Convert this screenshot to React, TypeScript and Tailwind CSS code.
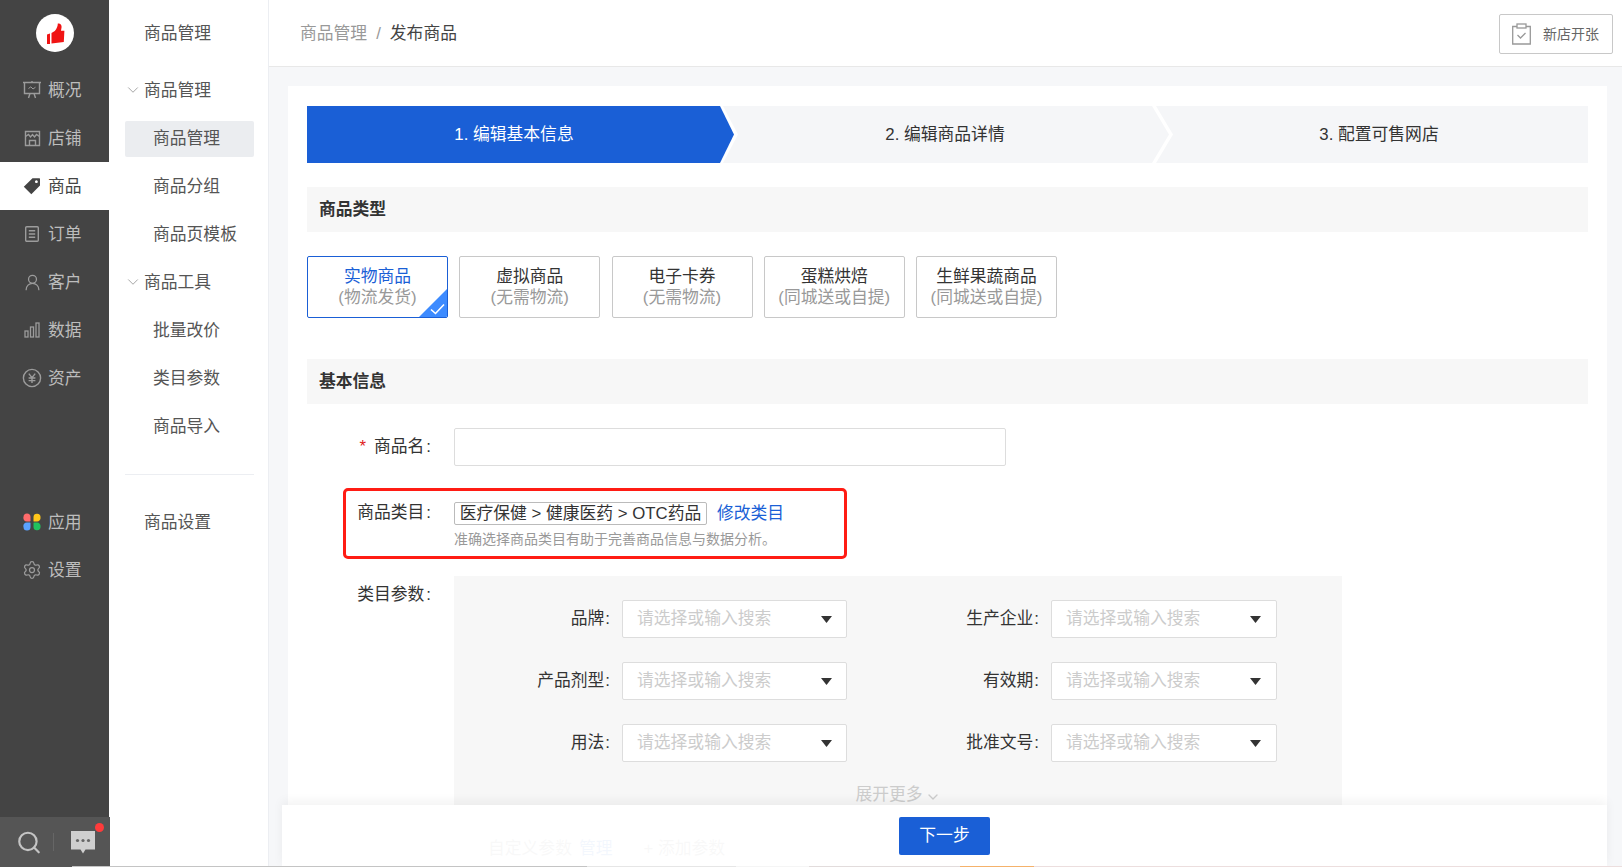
import { ChevronDown, Search, Settings, UserRound } from "lucide-react";
import type { ReactNode } from "react";

const BoardIcon = () => (
  <svg width="20" height="20" viewBox="0 0 20 20" fill="none" stroke="#9c9c9c" strokeWidth="1.4">
    <path d="M1 2.5H19M2.5 2.5V13.5H17.5V2.5M6.5 18 8 13.5M13.5 18 12 13.5M10 1V2.5" />
    <path d="M6.5 8.5 8.8 6.8 11 9 13.5 7.2" strokeWidth="1" />
  </svg>
);

const ShopIcon = () => (
  <svg width="19" height="19" viewBox="0 0 19 19" fill="none" stroke="#9c9c9c" strokeWidth="1.4">
    <path d="M2.5 2.5H16.5V16.5H2.5Z" />
    <path d="M2.5 7.5 5.5 5.5 7.5 8 9.5 5.5 11.5 8 13.5 5.5 16.5 7.5" />
    <path d="M6.5 16.5V11.5H12.5V16.5" />
  </svg>
);

const TagIcon = () => (
  <svg width="18" height="18" viewBox="0 0 18 18">
    <path
      fillRule="evenodd"
      d="M9.5 1.2 16.4 1.2 C16.8 1.2 17 1.5 17 1.8 L17 8.6 L8.3 17.2 L0.8 9.8 Z M13.4 3.3 a1.4 1.4 0 1 0 0.01 0 Z"
      fill="#444"
    />
  </svg>
);

const OrderIcon = () => (
  <svg width="18" height="18" viewBox="0 0 18 18" fill="none" stroke="#9c9c9c" strokeWidth="1.4">
    <rect x="2.7" y="1.7" width="12.6" height="14.6" rx="1" />
    <path d="M5.8 5.8h6.4M5.8 9h6.4M5.8 12.2h6.4" />
  </svg>
);

const BarsIcon = () => (
  <svg width="18" height="18" viewBox="0 0 18 18" fill="none" stroke="#9c9c9c" strokeWidth="1.3">
    <rect x="2" y="10" width="3" height="6" />
    <rect x="7.5" y="6" width="3" height="10" />
    <rect x="13" y="2" width="3" height="14" />
  </svg>
);

const YenIcon = () => (
  <svg width="20" height="20" viewBox="0 0 20 20" fill="none" stroke="#9c9c9c" strokeWidth="1.4">
    <circle cx="10" cy="10" r="8.6" />
    <path d="M6.8 5.6 10 9.6l3.2-4M6.6 10h6.8M6.6 12.6h6.8M10 9.6v5.4" />
  </svg>
);

const AppsIcon = () => (
  <svg width="18" height="18" viewBox="0 0 18 18">
    <path d="M0.5 4a3.5 3.5 0 0 1 7 0v3.8a0.7 0.7 0 0 1-0.7 0.7H4a3.5 3.5 0 0 1-3.5-4.5Z" fill="#ff6b6b" />
    <path d="M10.5 4a3.5 3.5 0 0 1 7 0.5a3.5 3.5 0 0 1-3.5 4h-3a0.5 0.5 0 0 1-0.5-0.5Z" fill="#ffc61a" />
    <path d="M4 9.5h3a0.5 0.5 0 0 1 0.5 0.5v4a3.5 3.5 0 0 1-7 0a3.5 3.5 0 0 1 3.5-4.5Z" fill="#5aa2ff" />
    <path d="M11 9.5h3a3.5 3.5 0 0 1 3.5 4a3.5 3.5 0 0 1-7 0.5v-4a0.5 0.5 0 0 1 0.5-0.5Z" fill="#21c25e" />
  </svg>
);

const mainNav: { label: string; icon: ReactNode; active?: boolean }[] = [
  { label: "概况", icon: <BoardIcon /> },
  { label: "店铺", icon: <ShopIcon /> },
  { label: "商品", icon: <TagIcon />, active: true },
  { label: "订单", icon: <OrderIcon /> },
  { label: "客户", icon: <UserRound size={19} color="#9c9c9c" strokeWidth={1.6} /> },
  { label: "数据", icon: <BarsIcon /> },
  { label: "资产", icon: <YenIcon /> },
];

const NavRow = ({ label, icon, active }: { label: string; icon: ReactNode; active?: boolean }) => (
  <div
    className={
      active
        ? "flex h-[48px] items-center gap-[6px] bg-white pl-[22px] text-[#444]"
        : "flex h-[48px] items-center gap-[6px] pl-[22px] text-[#bdbdbd]"
    }
  >
    <span className="flex w-[20px] justify-center">{icon}</span>
    <span className="pt-[2px]">{label}</span>
  </div>
);

const Sidebar = () => (
  <aside className="flex w-[109px] shrink-0 flex-col bg-[#444]">
    <div className="flex h-[66px] shrink-0 items-center justify-center">
      <div className="flex h-[38px] w-[38px] items-center justify-center rounded-full bg-white">
        <svg width="38" height="38" viewBox="0 0 38 38">
          <path d="M11 20.5 14 19.5V30H11Z" fill="#f01414" />
          <path
            d="M15.5 19 18.8 17C20.8 14.5 21.8 12 21.8 9.5C24 9 25.6 10.2 25.6 13L25 16.8H28.4L27.8 28 15.5 29.6Z"
            fill="#f01414"
          />
        </svg>
      </div>
    </div>
    {mainNav.map((item) => (
      <NavRow key={item.label} {...item} />
    ))}
    <div className="mt-[96px]">
      <NavRow label="应用" icon={<AppsIcon />} />
      <NavRow label="设置" icon={<Settings size={20} color="#9c9c9c" strokeWidth={1.5} />} />
    </div>
    <div className="relative mt-auto flex h-[50px] w-[110px] shrink-0 items-center bg-[#555]">
      <span className="ml-[16px] flex w-[26px] justify-center">
        <Search size={27} color="#c4c4c4" strokeWidth={2} />
      </span>
      <span className="ml-[11px] h-[18px] w-px bg-[#666]" />
      <svg className="ml-[17px]" width="24" height="23" viewBox="0 0 24 23">
        <path d="M0 0H24V18.5H14.5L12 22.5 9.5 18.5H0Z" fill="#cfcfcf" />
        <circle cx="6.5" cy="9.5" r="1.6" fill="#666" />
        <circle cx="12" cy="9.5" r="1.6" fill="#666" />
        <circle cx="17.5" cy="9.5" r="1.6" fill="#666" />
      </svg>
      <span className="absolute left-[95px] top-[6px] h-[9px] w-[9px] rounded-full bg-[#ff3b3b]" />
    </div>
  </aside>
);

const SubItem = ({ label, active }: { label: string; active?: boolean }) => (
  <div className="flex h-[48px] items-center pl-[16px] pt-px">
    <div
      className={
        active
          ? "flex h-[36px] w-[129px] shrink-0 items-center rounded-[2px] bg-[#ebedf0] pl-[28px] pt-px"
          : "flex h-[36px] w-[129px] shrink-0 items-center pl-[28px] pt-px"
      }
    >
      {label}
    </div>
  </div>
);

const GroupRow = ({ label }: { label: string }) => (
  <div className="flex h-[48px] items-center pl-[15px]">
    <ChevronDown size={18} color="#888" strokeWidth={1} />
    <span className="ml-[2px] pt-[2px]">{label}</span>
  </div>
);

const SubNav = () => (
  <aside className="w-[160px] shrink-0 border-r border-[#eceef2] bg-white text-[#555]">
    <div className="flex h-[66px] items-center pl-[35px] pt-[2px]">商品管理</div>
    <GroupRow label="商品管理" />
    <SubItem label="商品管理" active />
    <SubItem label="商品分组" />
    <SubItem label="商品页模板" />
    <GroupRow label="商品工具" />
    <SubItem label="批量改价" />
    <SubItem label="类目参数" />
    <SubItem label="商品导入" />
    <div className="ml-[16px] mt-[24px] w-[129px] border-t border-[#eceef2]" />
    <div className="mt-[23px] flex h-[48px] items-center pl-[35px] pt-[2px]">商品设置</div>
  </aside>
);

const StepBar = () => (
  <div className="flex h-[57px] bg-[#f5f6f8] text-[#333]">
    <div className="relative z-20 w-[431px] shrink-0 bg-white [clip-path:polygon(0_0,416px_0,100%_50%,416px_100%,0_100%)]">
      <div className="flex h-full w-[427px] items-center justify-center bg-[#1a5fd6] pr-[13px] text-white [clip-path:polygon(0_0,413px_0,100%_50%,413px_100%,0_100%)]">
        1. 编辑基本信息
      </div>
    </div>
    <div className="relative z-10 -ml-[15px] w-[450px] shrink-0 bg-white [clip-path:polygon(0_0,433px_0,100%_50%,433px_100%,0_100%)]">
      <div className="flex h-full w-[446px] items-center justify-center bg-[#f5f6f8] pr-[2px] [clip-path:polygon(0_0,429px_0,100%_50%,429px_100%,0_100%)]">
        2. 编辑商品详情
      </div>
    </div>
    <div className="-ml-[17px] flex flex-1 items-center justify-center pl-[14px]">3. 配置可售网店</div>
  </div>
);

const SectionTitle = ({ children }: { children: ReactNode }) => (
  <div className="flex h-[45px] items-center bg-[#f7f7f7] pl-[12px] pt-px font-bold text-[#333]">{children}</div>
);

const productTypes = [
  { name: "实物商品", sub: "(物流发货)", active: true },
  { name: "虚拟商品", sub: "(无需物流)" },
  { name: "电子卡券", sub: "(无需物流)" },
  { name: "蛋糕烘焙", sub: "(同城送或自提)" },
  { name: "生鲜果蔬商品", sub: "(同城送或自提)" },
];

const TypeCards = () => (
  <div className="mt-[24px] flex gap-[11.25px]">
    {productTypes.map((t) => (
      <div
        key={t.name}
        className={
          t.active
            ? "relative flex h-[62px] w-[141px] flex-col items-center justify-center overflow-hidden rounded-[2px] border border-[#1a5fd6] leading-[21px]"
            : "relative flex h-[62px] w-[141px] flex-col items-center justify-center overflow-hidden rounded-[2px] border border-[#c8c8c8] leading-[21px]"
        }
      >
        <span className={t.active ? "text-[#1a5fd6]" : "text-[#333]"}>{t.name}</span>
        <span className="text-[#999]">{t.sub}</span>
        {t.active && (
          <svg className="absolute bottom-0 right-0" width="28" height="28" viewBox="0 0 28 28">
            <path d="M28 0V28H0Z" fill="#3d8bff" />
            <path d="M12 20.5 16.5 24.5 25 15.5" fill="none" stroke="#fff" strokeWidth="1.6" />
          </svg>
        )}
      </div>
    ))}
  </div>
);

const SelectField = ({ label, wide }: { label: string; wide?: boolean }) => (
  <div className="flex items-center">
    <div className="w-[156px] text-right text-[#333]">
      {label}
      <span className="ml-px">:</span>
    </div>
    <div
      className={
        wide
          ? "ml-[12px] flex h-[38px] w-[226px] items-center justify-between rounded-[2px] border border-[#ddd] bg-white pl-[14px] pr-[15px] text-[#ccc]"
          : "ml-[12px] flex h-[38px] w-[225px] items-center justify-between rounded-[2px] border border-[#ddd] bg-white pl-[14px] pr-[14px] text-[#ccc]"
      }
    >
      <span>请选择或输入搜索</span>
      <svg width="11" height="7" viewBox="0 0 11 7">
        <path d="M0 0H11L5.5 7Z" fill="#333" />
      </svg>
    </div>
  </div>
);

const ProductForm = () => (
  <div className="mt-[24px] flex flex-1 flex-col">
    <div className="flex h-[38px] items-center">
      <div className="w-[125px] pr-px text-right text-[#333]">
        <span className="mr-[8px] text-[#e02020]">*</span>商品名
        <span className="ml-[2px]">:</span>
      </div>
      <div className="ml-[22px] h-[38px] w-[552px] rounded-[2px] border border-[#ddd]" />
    </div>

    <div className="ml-[36px] mt-[22px] flex h-[71px] w-[504px] rounded-[5px] border-[3px] border-[#ff1c14] pt-[10px]">
      <div className="w-[86px] pr-px text-right leading-[23px] text-[#333]">
        商品类目
        <span className="ml-[2px]">:</span>
      </div>
      <div className="ml-[22px]">
        <div className="flex items-center">
          <span className="flex h-[23px] w-[253px] items-center justify-center rounded-[2px] border border-[#bbb] text-[#333]">
            医疗保健 &gt; 健康医药 &gt; OTC药品
          </span>
          <span className="ml-[10px] text-[#1a5fd6]">修改类目</span>
        </div>
        <div className="mt-[3px] text-[14px] leading-[20px] text-[#999]">
          准确选择商品类目有助于完善商品信息与数据分析。
        </div>
      </div>
    </div>

    <div className="mt-[17px] flex flex-1">
      <div className="w-[125px] pr-px pt-[7px] text-right leading-[24px] text-[#333]">
        类目参数
        <span className="ml-[2px]">:</span>
      </div>
      <div className="ml-[22px] w-[888px] bg-[#f7f7f7] pt-[24px]">
        <div className="grid grid-cols-[429px_429px] gap-y-[24px]">
          <SelectField label="品牌" />
          <SelectField label="生产企业" wide />
          <SelectField label="产品剂型" />
          <SelectField label="有效期" wide />
          <SelectField label="用法" />
          <SelectField label="批准文号" wide />
        </div>
        <div className="mt-[21px] flex items-center justify-center leading-[24px] text-[#ccc]">
          展开更多
          <ChevronDown size={16} className="ml-[2px] mt-[3px]" />
        </div>
        <div className="ml-[34px] mt-[30px] flex leading-[24px]">
          <span className="text-[#777]">自定义参数</span>
          <span className="ml-[7px] text-[#1a5fd6]">管理</span>
          <span className="ml-[31px] text-[#777]">+ 添加参数</span>
        </div>
      </div>
    </div>
  </div>
);

const TopBar = () => (
  <header className="flex h-[67px] shrink-0 items-center justify-between border-b border-[#e8e8e8] bg-white pl-[31px] pr-[9px]">
    <div className="flex items-center pt-px">
      <span className="text-[#999]">商品管理</span>
      <span className="mx-[9px] text-[#999]">/</span>
      <span className="text-[#444]">发布商品</span>
    </div>
    <div className="mt-px flex h-[40px] w-[114px] items-center rounded-[2px] border border-[#c8c8c8] pl-[11px] text-[14px] text-[#666]">
      <svg width="21" height="22" viewBox="0 0 21 22" fill="none" stroke="#999" strokeWidth="1.3">
        <path d="M6 3.5H1.7V21H19.3V3.5H15" />
        <rect x="6" y="1" width="9" height="4" />
        <path d="M6.5 12 9.5 15 14.5 10" />
      </svg>
      <span className="ml-[11px] pt-[2px]">新店开张</span>
    </div>
  </header>
);

const bottomStrip = [
  { w: 515, c: "#c4c4c4" },
  { w: 149, c: "#e6e6e6" },
  { w: 73, c: "#f5f5f5" },
  { w: 151, c: "#e2dcdc" },
  { w: 74, c: "#f5b26b" },
  { w: 588, c: "#ecdede" },
];

export default function App() {
  return (
    <div className="relative flex h-[867px] w-[1622px] overflow-hidden bg-white font-['Liberation_Sans','Noto_Sans_CJK_SC',sans-serif] text-[16.8px]">
      <Sidebar />
      <SubNav />
      <main className="relative flex min-w-0 flex-1 flex-col bg-[#f6f7f9]">
        <TopBar />
        <div className="ml-[19px] mr-[15px] mt-[19px] flex flex-1 flex-col bg-white px-[19px] pt-[20px]">
          <StepBar />
          <div className="mt-[24px]">
            <SectionTitle>商品类型</SectionTitle>
          </div>
          <TypeCards />
          <div className="mt-[41px]">
            <SectionTitle>基本信息</SectionTitle>
          </div>
          <ProductForm />
        </div>
        <div className="absolute bottom-0 left-[13px] flex h-[62px] w-[1325px] items-center justify-center bg-white/95 shadow-[0_-4px_10px_rgba(0,0,0,0.05)]">
          <div className="flex h-[38px] w-[91px] items-center justify-center rounded-[2px] bg-[#1a5fd6] text-white">
            下一步
          </div>
        </div>
      </main>
      <div className="absolute bottom-0 left-[72px] flex h-px">
        {bottomStrip.map((s) => (
          <span key={s.c} className="h-px" style={{ width: s.w, backgroundColor: s.c }} />
        ))}
      </div>
    </div>
  );
}
